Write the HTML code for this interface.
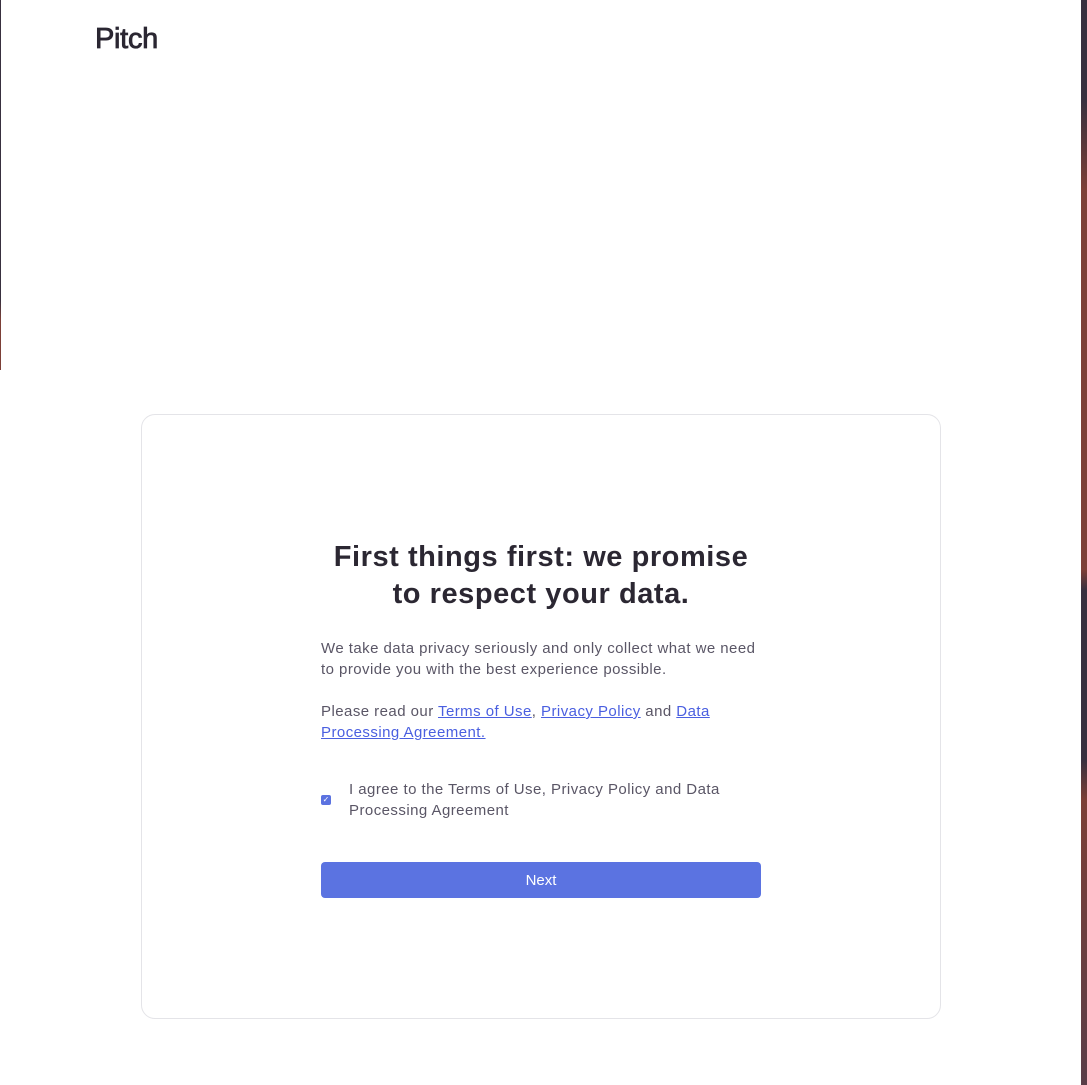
<!DOCTYPE html>
<html><head><meta charset="utf-8"><style>
html,body{margin:0;padding:0}
body{width:1087px;height:1085px;background:#fff;position:relative;overflow:hidden;font-family:"Liberation Sans",sans-serif;color:#2b2732}
.rstrip{position:absolute;right:0;top:0;width:6px;height:1085px;background:linear-gradient(to bottom,#38303f 0px,#38303f 100px,#7c3f37 190px,#7c3f37 570px,#38303f 590px,#38303f 760px,#7c3f37 800px,#5a3d48 1085px)}
.lstrip{position:absolute;left:0;top:0;width:1px;height:370px;background:linear-gradient(to bottom,#38303f 0,#38303f 300px,#7c3f37 320px)}
.logo{position:absolute;left:95px;top:23px;font-size:29px;font-weight:normal;-webkit-text-stroke:0.8px #2b2732;letter-spacing:-0.3px;color:#2b2732}
.card{position:absolute;left:141px;top:414px;width:800px;height:605px;border:1px solid #e4e4e8;border-radius:14px;box-sizing:border-box}
h1{position:absolute;left:0;width:1082px;top:539px;margin:0;text-align:center;font-size:29px;line-height:37px;letter-spacing:0.55px;font-weight:bold;color:#2b2732}
.txt{position:absolute;left:321px;width:480px;font-size:15px;line-height:21px;letter-spacing:0.45px;color:#5a5666}
a{color:#4a5fe0;text-decoration:underline}
.cb{position:absolute;left:321px;top:795px;width:10px;height:10px;background:#5b72e0;border-radius:2px;color:#fff;font-size:8px;line-height:10px;text-align:center}
.btn{position:absolute;left:321px;top:862px;width:440px;height:36px;background:#5b73e1;border-radius:4px;color:#fff;font-size:15px;line-height:38px;text-align:center}
</style></head><body>
<div class="lstrip"></div><div class="rstrip"></div>
<div class="logo">Pitch</div>
<div class="card"></div>
<h1>First things first: we promise<br>to respect your data.</h1>
<div class="txt" style="top:638px">We take data privacy seriously and only collect what we need<br>to provide you with the best experience possible.</div>
<div class="txt" style="top:701px">Please read our <a>Terms of Use</a>, <a>Privacy Policy</a> and <a>Data<br>Processing Agreement.</a></div>
<div class="cb">✓</div>
<div class="txt" style="left:349px;top:779px">I agree to the Terms of Use, Privacy Policy and Data<br>Processing Agreement</div>
<div class="btn">Next</div>
</body></html>
